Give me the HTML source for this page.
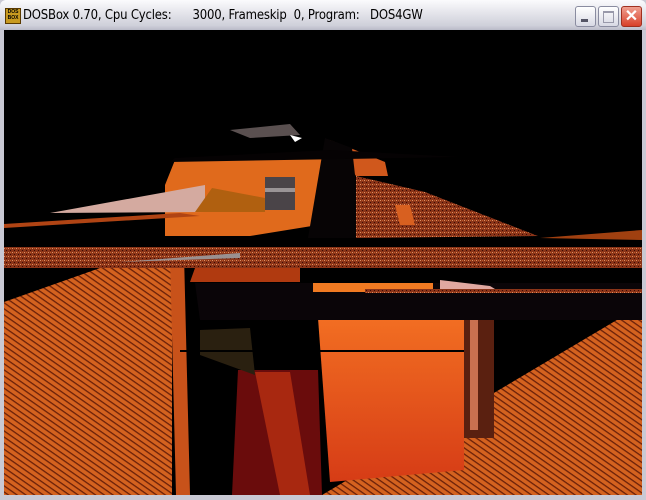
<!DOCTYPE html>
<html><head><style>
html,body{margin:0;padding:0;width:646px;height:499px;overflow:hidden;background:#c9c9d4}
#win{position:absolute;left:0;top:0;width:646px;height:499px;background:#c9c9d4}
#title{position:absolute;left:0;top:0;width:646px;height:30px;background:linear-gradient(#fbfbfd,#e6e6ec 40%,#cfd0da 85%,#babbc8);border-radius:6px 6px 0 0}
#title span{position:absolute;left:23px;top:8px;font:13px "DejaVu Sans Condensed","Liberation Sans",sans-serif;color:#000;white-space:pre;letter-spacing:-0.2px}
#ico{position:absolute;left:5px;top:8px;width:14px;height:14px;background:#c89a20;border:1px solid #5a3a00;font:bold 5px "Liberation Sans",sans-serif;color:#000;line-height:6px;text-align:center}
.btn{position:absolute;top:6px;width:19px;height:19px;border:1px solid #8a8ca0;border-radius:3px;background:linear-gradient(#fff,#d8d9e4)}
#game{position:absolute;left:4px;top:30px;width:638px;height:465px;background:#000}
</style></head><body>
<div id="win">
<div id="title"><div id="ico">DOS<br>BOX</div><span>DOSBox 0.70, Cpu Cycles:      3000, Frameskip  0, Program:   DOS4GW</span>
<div class="btn" style="left:575px"><div style="position:absolute;left:5px;top:12px;width:7px;height:3px;background:#556"></div></div>
<div class="btn" style="left:598px"><div style="position:absolute;left:4px;top:4px;width:9px;height:9px;border:1px solid #99a;border-top-width:2px"></div></div>
<div class="btn" style="left:621px;background:linear-gradient(#f0a090,#d8402a);border-color:#a03020;color:#fff;font:bold 16px 'Liberation Sans',sans-serif;text-align:center;line-height:19px">✕</div>
</div>
<div id="game">
<svg width="638" height="465" viewBox="4 30 638 465" xmlns="http://www.w3.org/2000/svg">
<defs>
<pattern id="st" width="5" height="5" patternUnits="userSpaceOnUse" patternTransform="rotate(35)"><rect width="5" height="5" fill="#d4621f"/><rect width="5" height="1.3" fill="#6a2008"/></pattern>
<pattern id="nz" width="4" height="4" patternUnits="userSpaceOnUse"><rect width="4" height="4" fill="#8a3418"/><rect x="0" y="0" width="1" height="1" fill="#e09060"/><rect x="2" y="2" width="1" height="1" fill="#3a0a04"/><rect x="2" y="0" width="1" height="1" fill="#c05a2a"/></pattern>
<linearGradient id="og" x1="0" y1="0" x2="0" y2="1"><stop offset="0" stop-color="#f26e22"/><stop offset="1" stop-color="#d63c16"/></linearGradient>
</defs>
<rect x="4" y="30" width="638" height="465" fill="#000"/>
<polygon points="4,302 100,268 172,250 172,495 4,495" fill="url(#st)"/>
<polygon points="170,255 184,255 190,495 176,495" fill="#c8521a"/>
<polygon points="322,495 642,305 642,495" fill="url(#st)"/>
<polygon points="318,318 464,318 464,470 330,482" fill="url(#og)"/>
<polygon points="238,370 318,370 322,495 232,495" fill="#6a0c0c"/>
<polygon points="255,372 290,372 310,495 280,495" fill="#a82810"/>
<polygon points="200,330 250,328 255,375 200,355" fill="#2a2010"/>
<rect x="180" y="350" width="284" height="2" fill="#000"/>
<rect x="464" y="318" width="30" height="120" fill="#5a2010"/>
<rect x="470" y="320" width="8" height="110" fill="#c87050"/>
<polygon points="195,283 642,283 642,320 200,320" fill="#0a0508"/>
<rect x="313" y="283" width="120" height="9" fill="#f07a22"/>
<polygon points="440,280 490,286 500,292 440,292" fill="#e0a8a0"/>
<rect x="365" y="289" width="277" height="4" fill="url(#nz)"/>
<polygon points="195,268 300,266 300,282 190,282" fill="#b03a10"/>
<rect x="4" y="247" width="638" height="21" fill="url(#nz)"/>
<polygon points="120,262 240,253 240,258" fill="#9a9090"/>
<polygon points="165,185 175,160 325,156 318,225 250,236 165,236" fill="#e06a1c"/>
<polygon points="330,140 385,162 388,176 356,176 345,160" fill="#d0581c"/>
<polygon points="325,138 352,148 362,238 308,238" fill="#070405"/>
<polygon points="356,176 425,192 538,236 356,238" fill="url(#nz)"/>
<polygon points="395,205 410,205 415,225 400,225" fill="#d86020"/>
<polygon points="50,213 205,185 205,212" fill="#d4aaa0"/>
<polygon points="195,212 212,188 265,198 265,212" fill="#b06010"/>
<rect x="265" y="177" width="30" height="33" fill="#4a4448"/>
<rect x="265" y="188" width="30" height="4" fill="#9a9496"/>
<polygon points="230,130 290,124 300,135 250,138" fill="#5a5050"/>
<polygon points="290,135 302,138 295,142" fill="#fff"/>
<polygon points="170,162 460,157 330,150 175,158" fill="#050203"/>
<polygon points="4,226 165,222 165,247 4,247" fill="#000"/>
<polygon points="4,224 180,213 200,216 4,228" fill="#b04414"/>
<polygon points="540,238 642,230 642,240" fill="#a04010"/>
</svg>
</div>
</div>
</body></html>
